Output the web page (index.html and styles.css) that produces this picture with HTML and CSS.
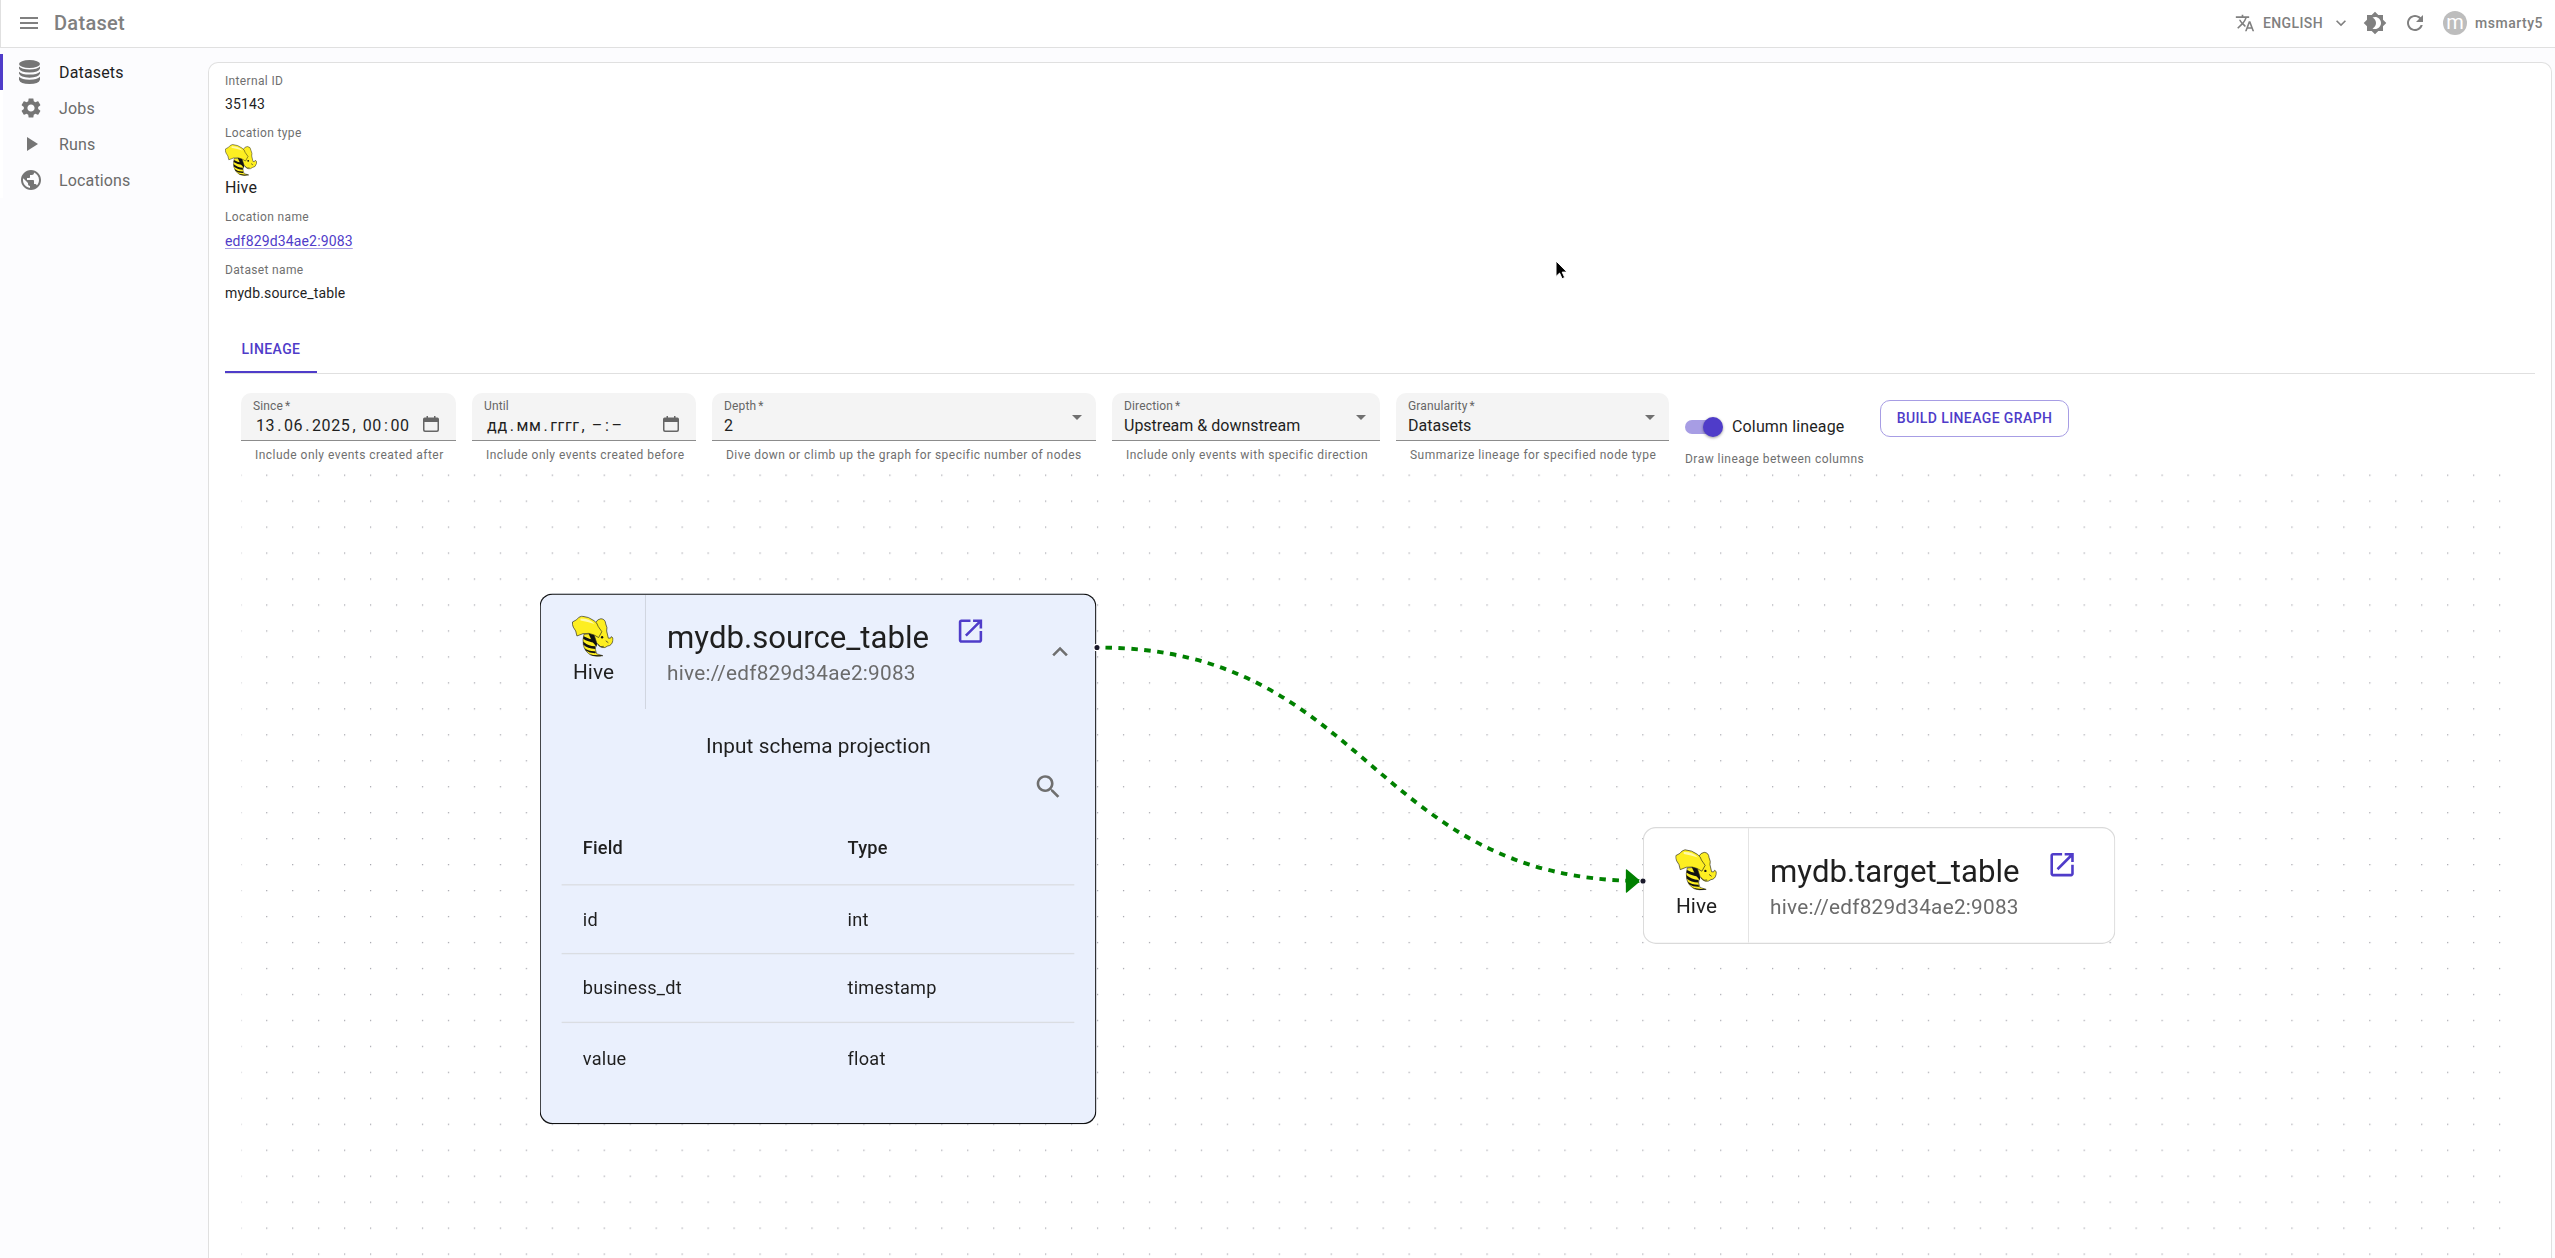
FILE: index.html
```html
<!DOCTYPE html>
<html lang="en">
<head>
<meta charset="utf-8">
<title>Dataset</title>
<link rel="stylesheet" href="styles.css">
</head>
<body>
<svg class="defs" width="0" height="0" aria-hidden="true">
  <symbol id="bee" viewBox="0 0 32 32">
    <path d="M9.200 14.500Q8 19 8.800 23Q10 28 14.500 30.500Q18 32 23.800 31L19 29.500 18 26 19 19 16 14Z" fill="#fdee21" stroke="#111" stroke-width=".4"/>
    <path d="M9 16Q13 18.500 17.500 18.500L18 21Q12 20.500 8.600 18ZM8.500 20Q12.500 23.500 17.800 23.700L17.900 25.800Q12 25.500 8.800 22.600ZM9.600 25Q13 27.700 17.900 27.500L18.400 29Q13.500 29.200 10.600 27ZM13 29.600Q17 31 22 30.600L23.800 31Q17 32.400 13 29.600Z" fill="#111"/>
    <path d="M12.500 13.500 17.500 14Q20 18 19 24L15.500 20Z" fill="#111"/>
    <path d="M18.300 5.500Q19.500 2.800 22.300 2.500Q25.700 2.700 26 6.500Q27.500 9.500 26.700 12L28 17.500Q30.300 18 30.200 16.300Q32.300 16.800 31.500 19.500Q30.600 23.300 27.500 23.500Q25.500 25.300 23 24.700Q20.500 24 19 21L16.500 13.500Z" fill="#fdee21" stroke="#222" stroke-width=".5"/>
    <path d="M.4 5 3.500 3.300Q5 1 7.500 .5Q13 .9 17 4Q19.500 5.500 20.200 8.500L23 12.500 20.500 17Q17 14.500 13 13.800L8.500 14 3.800 15.800Q3.300 11.500 1 9Q.1 7 .4 5Z" fill="#fdee21" stroke="#222" stroke-width=".5"/>
    <path d="M6.500 2.300Q13 2 17.500 6.500Q12 4.800 6.500 3.800Z" fill="#fff9a8"/>
    <path d="M16 13.500 20 14.500 22 12Z" fill="#fdee21"/>
    <circle cx="23.200" cy="16.800" r=".9" fill="#111"/>
    <path d="M19.800 22Q22 25 24.500 23.800M26 19.500 28 21" fill="none" stroke="#333" stroke-width=".6"/>
  </symbol>
  <symbol id="open" viewBox="0 0 24 24"><path d="M19 19H5V5h7V3H5c-1.110 0-2 .9-2 2v14c0 1.100.89 2 2 2h14c1.100 0 2-.9 2-2v-7h-2zM14 3v2h3.590l-9.830 9.830 1.410 1.410L19 6.410V10h2V3z"/></symbol>
  <symbol id="drop" viewBox="0 0 24 24"><path d="m7 10 5 5 5-5z"/></symbol>
  <symbol id="calendar" viewBox="0 0 16 16"><path d="M3.500 0h1.500v1.500h6V0h1.500v1.500H14A1.800 1.800 0 0 1 16 3.300V14a2 2 0 0 1-2 2H2a2 2 0 0 1-2-2V3.300A1.800 1.800 0 0 1 2 1.500h1.500zM1.500 6v7.700q0 .8.8.8h11.400q.8 0 .8-.8V6z"/></symbol>
</svg>

<header class="topbar">
  <svg class="ic" viewBox="0 0 24 24"><path d="M3 18h18v-2H3zm0-5h18v-2H3zm0-7v2h18V6z"/></svg>
  <h1 class="topbar-title">Dataset</h1>
  <div class="topbar-tools">
    <svg class="ic ic-lang" viewBox="0 0 24 24"><path d="m12.870 15.070-2.540-2.510.03-.03c1.740-1.940 2.980-4.170 3.710-6.530H17V4h-7V2H8v2H1v1.990h11.170C11.500 7.920 10.440 9.750 9 11.350 8.070 10.320 7.300 9.190 6.690 8h-2c.73 1.630 1.730 3.170 2.980 4.560l-5.090 5.020L4 19l5-5 3.110 3.110zM18.500 10h-2L12 22h2l1.120-3h4.750L21 22h2zm-2.620 7 1.620-4.330L19.120 17z"/></svg>
    <span class="lang">ENGLISH</span>
    <svg class="ic ic-more" viewBox="0 0 24 24"><path d="M16.590 8.590 12 13.170 7.410 8.590 6 10l6 6 6-6z"/></svg>
    <svg class="ic ic-theme" viewBox="0 0 24 24"><path d="M20 8.690V4h-4.690L12 .69 8.690 4H4v4.690L.69 12 4 15.310V20h4.690L12 23.310 15.310 20H20v-4.690L23.310 12zM12 18c-.89 0-1.740-.2-2.500-.55C11.560 16.500 13 14.420 13 12s-1.440-4.500-3.500-5.450C10.260 6.200 11.110 6 12 6c3.310 0 6 2.690 6 6s-2.690 6-6 6"/></svg>
    <svg class="ic ic-refresh" viewBox="0 0 24 24"><path d="M17.650 6.350C16.200 4.900 14.210 4 12 4c-4.420 0-7.990 3.580-7.990 8s3.570 8 7.990 8c3.730 0 6.840-2.550 7.730-6h-2.080c-.82 2.330-3.040 4-5.650 4-3.310 0-6-2.690-6-6s2.690-6 6-6c1.660 0 3.140.69 4.220 1.780L13 11h7V4z"/></svg>
    <span class="avatar">m</span>
    <span class="user">msmarty5</span>
  </div>
</header>

<div class="body">
  <nav class="side">
    <a class="side-item active"><svg class="ic ic-db" viewBox="0 0 448 512"><ellipse cx="224" cy="85" rx="224" ry="85"/><path d="M0 138Q60 200 224 200T448 138V180Q420 268 224 268T0 180ZM0 248Q60 310 224 310T448 248V290Q420 378 224 378T0 290ZM0 358Q60 420 224 420T448 358V420Q420 512 224 512T0 420Z"/></svg><span>Datasets</span></a>
    <a class="side-item"><svg class="ic" viewBox="0 0 24 24"><path d="M19.140 12.940c.04-.3.060-.61.060-.94 0-.32-.02-.64-.07-.94l2.030-1.580c.18-.14.23-.41.12-.61l-1.920-3.320c-.12-.22-.37-.29-.59-.22l-2.390.96c-.5-.38-1.030-.7-1.620-.94l-.36-2.540c-.04-.24-.24-.41-.48-.41h-3.840c-.24 0-.43.17-.47.41l-.36 2.540c-.59.24-1.130.57-1.620.94l-2.390-.96c-.22-.08-.47 0-.59.22L2.740 8.870c-.12.21-.08.47.12.61l2.030 1.580c-.05.3-.09.63-.09.94s.02.64.07.94l-2.030 1.580c-.18.14-.23.41-.12.61l1.920 3.320c.12.22.37.29.59.22l2.390-.96c.5.38 1.030.7 1.620.94l.36 2.540c.05.24.24.41.48.41h3.840c.24 0 .44-.17.47-.41l.36-2.540c.59-.24 1.130-.56 1.620-.94l2.390.96c.22.08.47 0 .59-.22l1.920-3.320c.12-.22.07-.47-.12-.61zM12 15.600c-1.980 0-3.600-1.620-3.600-3.600s1.620-3.600 3.600-3.600 3.600 1.620 3.600 3.600-1.620 3.600-3.600 3.600"/></svg><span>Jobs</span></a>
    <a class="side-item"><svg class="ic" viewBox="0 0 24 24"><path d="M8 5v14l11-7z"/></svg><span>Runs</span></a>
    <a class="side-item"><svg class="ic" viewBox="0 0 24 24"><path d="M12 2C6.480 2 2 6.480 2 12s4.480 10 10 10 10-4.480 10-10S17.520 2 12 2m-1 17.930c-3.950-.49-7-3.850-7-7.930 0-.62.080-1.210.21-1.790L9 15v1c0 1.100.9 2 2 2zm6.900-2.540c-.26-.81-1-1.390-1.900-1.390h-1v-3c0-.55-.45-1-1-1H8v-2h2c.55 0 1-.45 1-1V7h2c1.100 0 2-.9 2-2v-.41c2.930 1.190 5 4.060 5 7.410 0 2.080-.8 3.970-2.100 5.390"/></svg><span>Locations</span></a>
  </nav>

  <main class="card">
    <dl class="facts">
      <dt>Internal ID</dt>
      <dd>35143</dd>
      <dt>Location type</dt>
      <dd class="kind"><svg width="32" height="32"><use href="#bee"/></svg><span>Hive</span></dd>
      <dt>Location name</dt>
      <dd class="low"><a class="link">edf829d34ae2:9083</a></dd>
      <dt>Dataset name</dt>
      <dd>mydb.source_table</dd>
    </dl>

    <div class="tabs"><span class="tab">LINEAGE</span></div>

    <section class="lineage">
      <form class="filters">
        <div class="field w-since">
          <div class="box date"><label>Since<i>*</i></label><div class="value"><span>13<b>.</b>06<b>.</b>2025<b>,</b> 00<b>:</b>00</span><svg width="16" height="16"><use href="#calendar"/></svg></div></div>
          <p>Include only events created after</p>
        </div>
        <div class="field w-until">
          <div class="box date"><label>Until</label><div class="value"><span>дд<b>.</b>мм<b>.</b>гггг<b>,</b> –<b>:</b>–</span><svg width="16" height="16"><use href="#calendar"/></svg></div></div>
          <p>Include only events created before</p>
        </div>
        <div class="field w-depth">
          <div class="box"><label>Depth<i>*</i></label><div class="value">2</div><svg class="arrow"><use href="#drop"/></svg></div>
          <p>Dive down or climb up the graph for specific number of nodes</p>
        </div>
        <div class="field w-direction">
          <div class="box"><label>Direction<i>*</i></label><div class="value">Upstream &amp; downstream</div><svg class="arrow"><use href="#drop"/></svg></div>
          <p>Include only events with specific direction</p>
        </div>
        <div class="field w-gran">
          <div class="box"><label>Granularity<i>*</i></label><div class="value">Datasets</div><svg class="arrow"><use href="#drop"/></svg></div>
          <p>Summarize lineage for specified node type</p>
        </div>
        <div class="toggle">
          <div class="toggle-row"><span class="switch"></span><span class="toggle-text">Column lineage</span></div>
          <p>Draw lineage between columns</p>
        </div>
        <button type="button" class="build">BUILD LINEAGE GRAPH</button>
      </form>

      <div class="canvas">
        <svg class="grid" width="100%" height="100%">
          <pattern id="dots" x="-0.830" y=".57" width="25.964" height="25.964" patternUnits="userSpaceOnUse"><circle cx=".65" cy=".65" r=".65" fill="#91919a"/></pattern>
          <rect width="100%" height="100%" fill="url(#dots)"/>
        </svg>
        <div class="viewport">
          <article class="node node-source">
            <div class="node-head">
              <div class="node-kind"><svg width="32" height="32"><use href="#bee"/></svg><span>Hive</span></div>
              <div class="node-text"><h2>mydb.source_table</h2><p>hive://edf829d34ae2:9083</p></div>
              <svg class="node-open"><use href="#open"/></svg>
              <svg class="node-fold" viewBox="0 0 24 24"><path d="m12 8-6 6 1.410 1.410L12 10.830l4.590 4.580L18 14z"/></svg>
            </div>
            <h3>Input schema projection</h3>
            <div class="node-search"><svg viewBox="0 0 24 24"><path d="M15.500 14h-.79l-.28-.27C15.410 12.590 16 11.110 16 9.500 16 5.910 13.090 3 9.500 3S3 5.910 3 9.500 5.910 16 9.500 16c1.610 0 3.090-.59 4.230-1.570l.27.28v.79l5 4.990L20.490 19zm-6 0C7.010 14 5 11.990 5 9.500S7.010 5 9.500 5 14 7.010 14 9.500 11.990 14 9.500 14"/></svg></div>
            <div class="schema">
              <div class="row head"><span>Field</span><span>Type</span></div>
              <div class="row"><span>id</span><span>int</span></div>
              <div class="row"><span>business_dt</span><span>timestamp</span></div>
              <div class="row"><span>value</span><span>float</span></div>
            </div>
          </article>
          <article class="node node-target">
            <div class="node-head">
              <div class="node-kind"><svg width="32" height="32"><use href="#bee"/></svg><span>Hive</span></div>
              <div class="node-text"><h2>mydb.target_table</h2><p>hive://edf829d34ae2:9083</p></div>
              <svg class="node-open"><use href="#open"/></svg>
            </div>
          </article>
        </div>
        <svg class="edges" width="100%" height="100%">
          <path d="M856 173.500C1129 173.500 1129 407 1402 407" fill="none" stroke="#008000" stroke-width="3.900" stroke-dasharray="6.490" stroke-dashoffset="-8.300"/>
          <path d="M1385.500 396 1398.500 407 1385.500 418Z" fill="#008000" stroke="#008000" stroke-width="1.300" stroke-linejoin="round"/>
          <circle cx="856" cy="173.500" r="3.200" fill="#1a192b" stroke="#fff" stroke-width="1.300"/>
          <circle cx="1402" cy="407" r="3.200" fill="#1a192b" stroke="#fff" stroke-width="1.300"/>
        </svg>
      </div>
    </section>
  </main>
</div>
<svg class="cursor" width="13" height="20" viewBox="0 0 13 20"><path d="M1 1v15.500l3.600-3.400 2.500 5.600 2.600-1.200-2.500-5.400h4.800z" fill="#000" stroke="#fff" stroke-width="1"/></svg>
</body>
</html>
```
FILE: styles.css
```css
* { box-sizing: border-box; }
html, body { height: 100%; }
body {
  margin: 0;
  display: flex;
  flex-direction: column;
  overflow: hidden;
  background: #fcfcfe;
  color: #1f1f1f;
  font-family: Roboto, "Noto Sans", sans-serif;
  font-size: 14px;
}
h1, h2, h3, p, dl, dd { margin: 0; }
svg { display: block; fill: currentColor; flex: none; }
.defs { position: absolute; }
.ic { width: 24px; height: 24px; }

/* top bar */
.topbar {
  height: 48px;
  flex: none;
  display: flex;
  align-items: center;
  padding: 0 12px 1px 16px;
  border-left: 1px solid #e0e0e0;
  border-bottom: 1px solid #e0e0e0;
  background: #fff;
  color: #808080;
}
.topbar-title { margin-left: 13px; font-size: 20px; font-weight: 500; letter-spacing: .3px; }
.topbar-tools { margin-left: auto; display: flex; align-items: center; font-weight: 500; }
.ic-lang { width: 20px; height: 20px; }
.lang { margin-left: 8px; letter-spacing: .4px; }
.ic-more { width: 20px; height: 20px; margin-left: 8px; }
.ic-theme { margin-left: 12px; }
.ic-refresh { margin-left: 16px; }
.avatar {
  width: 24px;
  height: 24px;
  margin-left: 16px;
  border-radius: 50%;
  background: #bdbdbd;
  color: #fff;
  font-size: 20px;
  font-weight: 400;
  line-height: 23px;
  text-align: center;
}
.user { margin-left: 8px; letter-spacing: .5px; }

/* layout */
.body { flex: 1; min-height: 0; display: flex; }
.side { width: 208px; flex: none; padding-top: 6px; }
.side-item {
  height: 36px;
  display: flex;
  align-items: center;
  padding-left: 16px;
  border-left: 3px solid #fff;
  color: #6b6b6b;
  font-size: 16px;
  letter-spacing: .15px;
}
.side-item span { margin-left: 16px; }
.side-item .ic { color: #757575; }
.side-item.active { border-color: #4f3cc9; color: #1f1f1f; }
.side-item .ic-db { width: 21px; margin-right: 3px; }
.card {
  width: 2344px;
  margin-top: 14px;
  padding: 10px 16px 0;
  display: flex;
  flex-direction: column;
  border: 1px solid #e0e0e0;
  border-bottom: 0;
  border-radius: 10px 10px 0 0;
  background: #fff;
}

/* dataset facts */
.facts { height: 265px; }
.facts dt { height: 16px; font-size: 12px; line-height: 16px; letter-spacing: .35px; color: #6f6f6f; }
.facts dd { height: 36px; padding-top: 5px; line-height: 20px; letter-spacing: .15px; }
.facts .kind { height: 68px; padding-top: 3px; font-size: 16px; }
.facts .low { height: 37px; padding-top: 6px; }
.kind span { display: block; margin-top: 1px; line-height: 22px; }
.link { color: #4f3cc9; text-decoration: underline; text-decoration-color: #a79de4; text-underline-offset: 2px; }

.tabs { height: 36px; border-bottom: 1px solid #e0e0e0; }
.tab {
  display: block;
  width: 92px;
  height: 35px;
  border-bottom: 2px solid #4f3cc9;
  color: #4f3cc9;
  font-weight: 500;
  letter-spacing: .4px;
  line-height: 23px;
  text-align: center;
}

/* filters */
.lineage { flex: 1; min-height: 0; display: flex; flex-direction: column; padding: 19px 16px 0; }
.filters { display: flex; gap: 16px; height: 81px; flex: none; }
.filters p { margin-top: 4px; font-size: 12px; line-height: 20px; letter-spacing: .47px; white-space: nowrap; color: #6f6f6f; }
.field p { padding-left: 14px; }
.w-since { width: 215px; }
.w-until { width: 224px; }
.w-depth { width: 384px; }
.w-direction { width: 268px; }
.w-gran { width: 273px; }
.box {
  position: relative;
  height: 48px;
  padding: 6px 12px 0;
  border-bottom: 1px solid #8c8c8c;
  border-radius: 10px 10px 0 0;
  background: #f4f4f4;
}
.box label { display: block; font-size: 12px; line-height: 15px; letter-spacing: .15px; color: #666; }
.box label i { margin-left: 2px; font-style: normal; }
.box .value { font-size: 16px; line-height: 24px; }
.date .value { display: flex; align-items: center; justify-content: space-between; padding: 0 5px 0 3px; letter-spacing: .6px; }
.date b { margin: 0 2px; font-weight: 400; }
.date svg { color: #666; margin-top: -4px; }
.arrow { position: absolute; right: 7px; top: 12px; width: 24px; height: 24px; color: #707070; }
.toggle { padding-top: 22px; width: 179px; }
.toggle-row { display: flex; align-items: center; height: 24px; }
.toggle-text { margin: -2px 0 0 9px; font-size: 16px; letter-spacing: .15px; }
.toggle p { margin-top: 10px; }
.switch { position: relative; width: 34px; height: 14px; margin-right: 4px; border-radius: 7px; background: #a79de4; }
.switch::after {
  content: "";
  position: absolute;
  right: -4px;
  top: -3px;
  width: 20px;
  height: 20px;
  border-radius: 50%;
  background: #4f3cc9;
  box-shadow: 0 1px 3px rgba(0, 0, 0, .4);
}
.build {
  width: 189px;
  height: 37px;
  margin-top: 7px;
  padding: 0 0 1px;
  border: 1px solid #a79de4;
  border-radius: 10px;
  background: #fff;
  color: #4f3cc9;
  font: 500 14px Roboto, sans-serif;
  letter-spacing: .4px;
}

/* graph canvas */
.canvas { position: relative; flex: 1; overflow: hidden; }
.grid, .edges, .viewport { position: absolute; left: 0; top: 0; }
.viewport { transform: scale(1.298); transform-origin: 0 0; }
.node { position: absolute; padding: 1px; border-radius: 10px; background: #fff; box-shadow: inset 0 0 0 .85px #dadada; }
.node-source { left: 230.35px; top: 91.68px; width: 429.12px; height: 409.1px; box-shadow: inset 0 0 0 .95px #111; background: #eaf0fd; }
.node-target { left: 1080.12px; top: 271.96px; width: 363.64px; height: 90.14px; }
.node-head { display: flex; height: 88px; }
.node-kind { width: 80.6px; padding-top: 16px; display: flex; flex-direction: column; align-items: center; box-shadow: inset -.77px 0 0 #d0d5e0; font-size: 16px; line-height: 24px; letter-spacing: .1px; }
.node-kind svg { margin-left: -1px; }
.node-target .node-kind { box-shadow: inset -.77px 0 0 #dadada; }
.node-text { width: 203px; margin-left: 16.3px; padding-top: 17px; white-space: nowrap; }
.node-text h2 { font-size: 24px; font-weight: 400; line-height: 32px; }
.node-text p { font-size: 16px; line-height: 24px; color: #6b6b6b; letter-spacing: .18px; }
.node-open { width: 24px; height: 24px; margin: 16px 0 0 18.5px; color: #4f3cc9; }
.node-target .node-text { width: 194px; }
.node-fold { width: 24px; height: 24px; margin: 32px 15.5px 0 auto; color: #6f6f6f; }
.node h3 { margin-top: 17px; text-align: center; font-size: 16px; font-weight: 400; line-height: 24px; letter-spacing: .05px; }
.node-search { display: flex; justify-content: flex-end; padding: 7px 24.5px 0 0; color: #6f6f6f; }
.node-search svg { width: 24px; height: 24px; }
.schema { margin: 8.5px 16px 0 15.5px; letter-spacing: .15px; }
.row { display: grid; grid-template-columns: 204px 1fr; height: 53.15px; padding: 0 0 1px 16.5px; align-items: center; border-bottom: 1px solid #dadde2; }
.row.head { height: 56px; font-weight: 500; }
.row:last-child { border: 0; }

.cursor { position: absolute; left: 1555px; top: 260px; }
```
